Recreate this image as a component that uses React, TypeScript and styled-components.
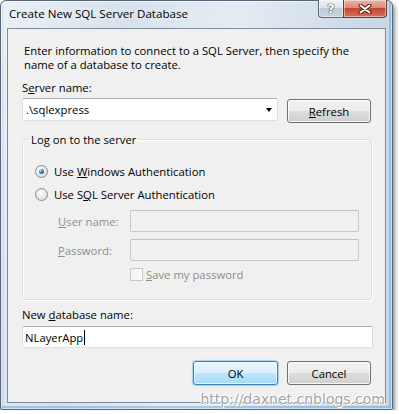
import React from 'react';
import styled, { createGlobalStyle, css } from 'styled-components';

const GlobalStyle = createGlobalStyle`
  html, body {
    margin: 0;
    padding: 0;
    background: #ffffff;
  }
  body {
    font-family: "Open Sans", "Liberation Sans", sans-serif;
    font-size: 11.3px;
    color: #000000;
  }
`;

const Window = styled.div`
  position: relative;
  box-sizing: border-box;
  width: 393px;
  height: 410px;
  display: flex;
  flex-direction: column;
  padding: 0 6px 6px 6px;
  border: 1px solid #56657a;
  border-radius: 6px 6px 2px 2px;
  background:
    linear-gradient(100deg, rgba(255, 255, 255, 0.55) 0%, rgba(255, 255, 255, 0) 28%,
      rgba(255, 255, 255, 0.35) 52%, rgba(255, 255, 255, 0) 78%),
    linear-gradient(to right, #a9bfd8 0, #d3dfea 4px, #d9e3ed 50%, #c9d8e7 100%);
  box-shadow:
    inset 0 0 0 1px rgba(255, 255, 255, 0.55),
    inset -2px -2px 0 1px rgba(86, 160, 222, 0.45),
    2px 3px 4px rgba(0, 0, 0, 0.45);
`;

const TitleBar = styled.div`
  display: flex;
  align-items: flex-start;
  height: 27px;
`;

const TitleText = styled.div`
  padding: 5px 0 0 2px;
  font-size: 11.6px;
  line-height: 16px;
  color: #000000;
  text-shadow: 0 0 6px rgba(255, 255, 255, 0.9);
`;

const CaptionButtons = styled.div`
  display: flex;
  margin: -1px -1px 0 auto;
`;

const CaptionButton = styled.div<{ $kind: 'help' | 'close' }>`
  box-sizing: border-box;
  height: 18px;
  display: flex;
  align-items: center;
  justify-content: center;
  border: 1px solid #5e6b79;
  border-top: none;
  box-shadow: inset 0 0 0 1px rgba(255, 255, 255, 0.45);
  ${p =>
    p.$kind === 'help'
      ? css`
          width: 25px;
          border-right: none;
          border-radius: 0 0 0 4px;
          background: linear-gradient(#eef2f6 0%, #dbe3eb 45%, #bfcbd7 50%, #c9d4de 100%);
        `
      : css`
          width: 44px;
          border-color: #6a3e38;
          border-radius: 0 0 4px 0;
          background: linear-gradient(#eab5a6 0%, #dc8a76 45%, #c4462d 50%, #d7715a 100%);
        `}
`;

const HelpGlyph = styled.span`
  font-family: "DejaVu Sans", sans-serif;
  font-weight: bold;
  font-size: 13px;
  line-height: 13px;
  color: #ffffff;
  text-shadow: 0 0 1px #3a4450, 0 0 1px #3a4450, 0 0 1px #3a4450;
`;

const Client = styled.div`
  flex: 1;
  display: flex;
  flex-direction: column;
  border: 1px solid #7c8a9b;
  background: #f0f0f0;
  padding: 0 13px 0 14px;
`;

const Intro = styled.p`
  margin: 15px 0 0 2px;
  line-height: 14px;
`;

const Label = styled.div<{ $disabled?: boolean }>`
  line-height: 15px;
  color: ${p => (p.$disabled ? '#8e8e8e' : '#000000')};
`;

const FieldLabel = styled(Label)`
  margin-top: 8px;
`;

const DbLabel = styled(Label)`
  margin-top: 7px;
`;

const Key = styled.span`
  text-decoration: underline;
  text-underline-offset: 1px;
`;

const ServerRow = styled.div`
  display: flex;
  align-items: flex-start;
  gap: 9px;
  margin-top: 3px;
`;

const TextBox = styled.div<{ $disabled?: boolean }>`
  box-sizing: border-box;
  height: 22px;
  display: flex;
  align-items: center;
  padding: 0 3px;
  border: 1px solid ${p => (p.$disabled ? '#c6c9cc' : '#dbe0e6')};
  border-top-color: ${p => (p.$disabled ? '#bfc2c5' : '#abadb3')};
  border-radius: 2px;
  background: ${p => (p.$disabled ? '#f0f0f0' : '#ffffff')};
`;

const ComboBox = styled(TextBox)`
  width: 256px;
  height: 23px;
  justify-content: space-between;
  padding-right: 5px;
`;

const ComboArrow = styled.span`
  width: 0;
  height: 0;
  border-left: 3.5px solid transparent;
  border-right: 3.5px solid transparent;
  border-top: 4px solid #000000;
`;

const PushButton = styled.div<{ $default?: boolean }>`
  box-sizing: border-box;
  width: 84px;
  height: 24px;
  display: flex;
  align-items: center;
  justify-content: center;
  border: 1px solid #707070;
  border-radius: 3px;
  background: linear-gradient(#f2f2f2 0%, #ebebeb 50%, #dddddd 50%, #cfcfcf 100%);
  box-shadow: inset 0 0 0 1px rgba(255, 255, 255, 0.8);
  ${p =>
    p.$default &&
    css`
      width: 85px;
      border-color: #3c7fb1;
      background: linear-gradient(#eaf6fd 0%, #d9f0fc 50%, #bee6fd 50%, #a7d9f5 100%);
      box-shadow: inset 0 0 0 1px rgba(255, 255, 255, 0.7), 0 0 1px 1px rgba(110, 190, 240, 0.6);
    `}
`;

const RefreshButton = styled(PushButton)`
  margin-top: 1px;
`;

const GroupBox = styled.fieldset`
  margin: 9px 0 0 0;
  padding: 0;
  border: 1px solid #d5dfe5;
  border-radius: 3px;
  box-shadow: inset 1px 1px 0 #ffffff, 1px 1px 0 #ffffff;
`;

const GroupLegend = styled.legend`
  margin-left: 6px;
  padding: 0 2px;
  line-height: 15px;
`;

const GroupBody = styled.div`
  display: flex;
  flex-direction: column;
  padding: 17px 12px 17px 12px;
`;

const OptionRow = styled.div<{ $gap?: number }>`
  display: flex;
  align-items: center;
  gap: 6px;
  line-height: 15px;
  margin-top: ${p => p.$gap ?? 0}px;
`;

const Radio = styled.span<{ $checked?: boolean }>`
  position: relative;
  box-sizing: border-box;
  width: 13px;
  height: 13px;
  border-radius: 50%;
  border: 1px solid #8a8c8f;
  background: radial-gradient(circle at 45% 40%, #ffffff 0%, #eeeeee 40%, #cfd0d2 100%);
  ${p =>
    p.$checked &&
    css`
      &::after {
        content: '';
        position: absolute;
        left: 3px;
        top: 3px;
        width: 5px;
        height: 5px;
        border-radius: 50%;
        background: radial-gradient(circle at 35% 30%, #a8dcff 0%, #2f7fc4 45%, #0c3c6c 100%);
      }
    `}
`;

const CredGrid = styled.div`
  display: grid;
  grid-template-columns: 72px 1fr;
  align-items: center;
  row-gap: 7px;
  margin: 8px 0 0 23px;
`;

const CheckRow = styled.div`
  grid-column: 2;
  display: flex;
  align-items: center;
  gap: 3px;
  line-height: 15px;
  margin-top: -1px;
`;

const CheckBox = styled.span`
  box-sizing: border-box;
  width: 13px;
  height: 13px;
  border: 1px solid #c6c8ca;
  background: linear-gradient(135deg, #f1f1f1, #fbfbfb);
`;

const DbRow = styled.div`
  display: flex;
  flex-direction: column;
`;

const DbInput = styled(TextBox)`
  margin-top: 4px;
  margin-right: -1px;
  padding-left: 2px;
`;

const Caret = styled.span`
  display: inline-block;
  width: 1px;
  height: 15px;
  margin-left: 1px;
  background: #000000;
`;

const ButtonRow = styled.div`
  display: flex;
  justify-content: flex-end;
  gap: 9px;
  margin-top: 13px;
  margin-right: 1px;
`;

const Watermark = styled.div`
  position: absolute;
  right: 7px;
  bottom: 1px;
  font-family: "DejaVu Sans", Verdana, sans-serif;
  font-size: 14px;
  line-height: 18px;
  color: #a3a3a3;
  text-shadow: 0 0 1px #ffffff, 0 0 1px #ffffff, 1px 1px 0 #ffffff, -1px -1px 0 #ffffff;
  pointer-events: none;
`;

const CloseGlyph = () => (
  <svg width="14" height="10" viewBox="0 0 14 10">
    <path d="M2.5 1.5 L11.5 8.5 M11.5 1.5 L2.5 8.5" stroke="#4b2622" strokeWidth="4" strokeLinecap="round" />
    <path d="M2.5 1.5 L11.5 8.5 M11.5 1.5 L2.5 8.5" stroke="#ffffff" strokeWidth="2" strokeLinecap="round" />
  </svg>
);

export default function App() {
  return (
    <>
      <GlobalStyle />
      <Window>
        <TitleBar>
          <TitleText>Create New SQL Server Database</TitleText>
          <CaptionButtons>
            <CaptionButton $kind="help">
              <HelpGlyph>?</HelpGlyph>
            </CaptionButton>
            <CaptionButton $kind="close">
              <CloseGlyph />
            </CaptionButton>
          </CaptionButtons>
        </TitleBar>

        <Client>
          <Intro>
            Enter information to connect to a SQL Server, then specify the
            <br />
            name of a database to create.
          </Intro>

          <FieldLabel>
            S<Key>e</Key>rver name:
          </FieldLabel>
          <ServerRow>
            <ComboBox>
              <span>.\sqlexpress</span>
              <ComboArrow />
            </ComboBox>
            <RefreshButton>
              <span>
                <Key>R</Key>efresh
              </span>
            </RefreshButton>
          </ServerRow>

          <GroupBox>
            <GroupLegend>Log on to the server</GroupLegend>
            <GroupBody>
              <OptionRow>
                <Radio $checked />
                <span>
                  Use <Key>W</Key>indows Authentication
                </span>
              </OptionRow>
              <OptionRow $gap={8}>
                <Radio />
                <span>
                  Use S<Key>Q</Key>L Server Authentication
                </span>
              </OptionRow>
              <CredGrid>
                <Label $disabled>
                  <Key>U</Key>ser name:
                </Label>
                <TextBox $disabled />
                <Label $disabled>
                  <Key>P</Key>assword:
                </Label>
                <TextBox $disabled />
                <CheckRow>
                  <CheckBox />
                  <Label $disabled>
                    <Key>S</Key>ave my password
                  </Label>
                </CheckRow>
              </CredGrid>
            </GroupBody>
          </GroupBox>

          <DbRow>
            <DbLabel>
              New <Key>d</Key>atabase name:
            </DbLabel>
            <DbInput>
              <span>NLayerApp</span>
              <Caret />
            </DbInput>
          </DbRow>

          <ButtonRow>
            <PushButton $default>OK</PushButton>
            <PushButton>Cancel</PushButton>
          </ButtonRow>
        </Client>

        <Watermark>http://daxnet.cnblogs.com</Watermark>
      </Window>
    </>
  );
}
